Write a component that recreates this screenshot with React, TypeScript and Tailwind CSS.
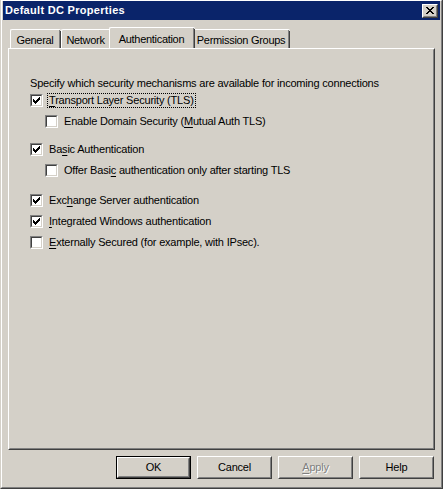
const ui = "font-['Liberation_Sans',Arial,sans-serif]";

function CheckMark() {
  return (
    <svg width="7" height="7" viewBox="0 0 7 7" shapeRendering="crispEdges" className="block">
      <path
        d="M6 0h1v1h-1z M5 1h2v1h-2z M0 2h1v1h-1z M4 2h3v1h-3z M0 3h2v1h-2z M3 3h3v1h-3z M0 4h5v1h-5z M1 5h3v1h-3z M2 6h1v1h-1z"
        fill="#000"
      />
    </svg>
  );
}

function CloseGlyph() {
  return (
    <svg width="8" height="7" viewBox="0 0 8 7" shapeRendering="crispEdges" className="block">
      <path
        d="M0 0h2v1h-2z M6 0h2v1h-2z M1 1h2v1h-2z M5 1h2v1h-2z M2 2h4v1h-4z M3 3h2v1h-2z M2 4h4v1h-4z M1 5h2v1h-2z M5 5h2v1h-2z M0 6h2v1h-2z M6 6h2v1h-2z"
        fill="#000"
      />
    </svg>
  );
}

function Box({ checked }: { checked: boolean }) {
  return (
    <div className="w-[13px] h-[13px] shrink-0 border border-t-[#808080] border-l-[#808080] border-b-white border-r-white">
      <div className="w-full h-full border border-t-[#404040] border-l-[#404040] border-b-[#d4d0c8] border-r-[#d4d0c8] bg-white p-[1px]">
        {checked && <CheckMark />}
      </div>
    </div>
  );
}

function Row({
  checked,
  indent,
  focus,
  className,
  children,
}: {
  checked: boolean;
  indent?: boolean;
  focus?: boolean;
  className?: string;
  children: React.ReactNode;
}) {
  return (
    <div className={`flex items-center h-[21px] ${indent ? "pl-[15px]" : ""} ${className ?? ""}`}>
      <Box checked={checked} />
      <span
        className={`ml-[4px] px-[1px] leading-[13px] border border-dotted ${
          focus ? "border-black" : "border-transparent"
        }`}
      >
        {children}
      </span>
    </div>
  );
}

function U({ children }: { children: React.ReactNode }) {
  return <span className="underline underline-offset-[2px]">{children}</span>;
}

function Tab({ label, active, width }: { label: string; active?: boolean; width: string }) {
  if (active) {
    return (
      <div
        className={`${width} h-[21px] -mx-[2px] relative z-10 -mb-[1px] bg-[#d4d0c8] border-l border-t border-white rounded-tl-[2px] rounded-tr-[2px] flex`}
      >
        <div className="flex-1 flex items-start justify-center pt-[3px] border-r border-[#808080] tracking-[-0.3px]">
          {label}
        </div>
        <div className="w-[1px] mt-[1px] bg-[#404040]" />
      </div>
    );
  }
  return (
    <div
      className={`${width} h-[19px] mt-[2px] bg-[#d4d0c8] border-l border-t border-white rounded-tl-[2px] rounded-tr-[2px] flex`}
    >
      <div className="flex-1 flex items-start justify-center pt-[2px] border-r border-[#808080] tracking-[-0.3px] whitespace-nowrap">
        {label}
      </div>
      <div className="w-[1px] mt-[1px] bg-[#404040]" />
    </div>
  );
}

function Button({
  children,
  isDefault,
  disabled,
}: {
  children: React.ReactNode;
  isDefault?: boolean;
  disabled?: boolean;
}) {
  const inner = (
    <div className="h-full border border-t-white border-l-white border-b-[#404040] border-r-[#404040]">
      <div
        className={`h-full flex items-center justify-center border border-transparent border-b-[#808080] border-r-[#808080] ${
          disabled ? "text-[#808080] [text-shadow:1px_1px_0_#ffffff]" : "text-black"
        }`}
      >
        {children}
      </div>
    </div>
  );
  if (isDefault) {
    return <div className="w-[75px] h-[23px] border border-black">{inner}</div>;
  }
  return <div className="w-[75px] h-[23px]">{inner}</div>;
}

export default function App() {
  return (
    <div className={`w-[443px] h-[489px] bg-[#d4d0c8] ${ui} text-[11px] tracking-[-0.2px] text-black`}>
      <div className="w-full h-full border-r border-b border-[#404040] border-l border-l-[#d4d0c8]">
        <div className="w-full h-full flex flex-col border-t border-l border-white border-r border-b border-r-[#808080] border-b-[#808080]">
          {/* title bar */}
          <div className="h-[19px] mx-[1px] bg-[#0a246a] flex items-center justify-between pl-[2px] pr-[2px]">
            <span className="text-white font-bold text-[11px] tracking-[0.3px]">Default DC Properties</span>
            <div className="w-[16px] h-[14px] bg-[#d4d0c8] border border-t-white border-l-white border-b-[#404040] border-r-[#404040]">
              <div className="w-full h-full flex items-center justify-center border border-transparent border-b-[#808080] border-r-[#808080]">
                <CloseGlyph />
              </div>
            </div>
          </div>

          <div className="flex-1 flex flex-col px-[6px] pb-[8px]">
            {/* tabs */}
            <div className="flex items-start h-[21px] mt-[7px] pl-[2px]">
              <Tab label="General" width="w-[51px]" />
              <Tab label="Network" width="w-[50px]" />
              <Tab label="Authentication" width="w-[86px]" active />
              <Tab label="Permission Groups" width="w-[97px]" />
            </div>

            {/* panel */}
            <div className="flex-1 border-t border-l border-white border-r border-b border-r-[#404040] border-b-[#404040]">
              <div className="h-full border border-transparent border-r-[#808080] border-b-[#808080] pl-[20px] pt-[26px]">
                <div className="leading-[14px]">
                  Specify which security mechanisms are available for incoming connections
                </div>
                <Row checked focus>
                  <U>T</U>ransport Layer Security (TLS)
                </Row>
                <Row checked={false} indent>
                  Enable Domain Security (<U>M</U>utual Auth TLS)
                </Row>
                <Row checked className="mt-[7px]">
                  Ba<U>s</U>ic Authentication
                </Row>
                <Row checked={false} indent>
                  Offer Basi<U>c</U> authentication only after starting TLS
                </Row>
                <Row checked className="mt-[9px]">
                  Exc<U>h</U>ange Server authentication
                </Row>
                <Row checked>
                  <U>I</U>ntegrated Windows authentication
                </Row>
                <Row checked={false}>
                  <U>E</U>xternally Secured (for example, with IPsec).
                </Row>
              </div>
            </div>

            {/* buttons */}
            <div className="flex justify-end gap-[6px] mt-[6px] pr-[1px]">
              <Button isDefault>OK</Button>
              <Button>Cancel</Button>
              <Button disabled>
                <U>A</U>pply
              </Button>
              <Button>Help</Button>
            </div>
          </div>
        </div>
      </div>
    </div>
  );
}
